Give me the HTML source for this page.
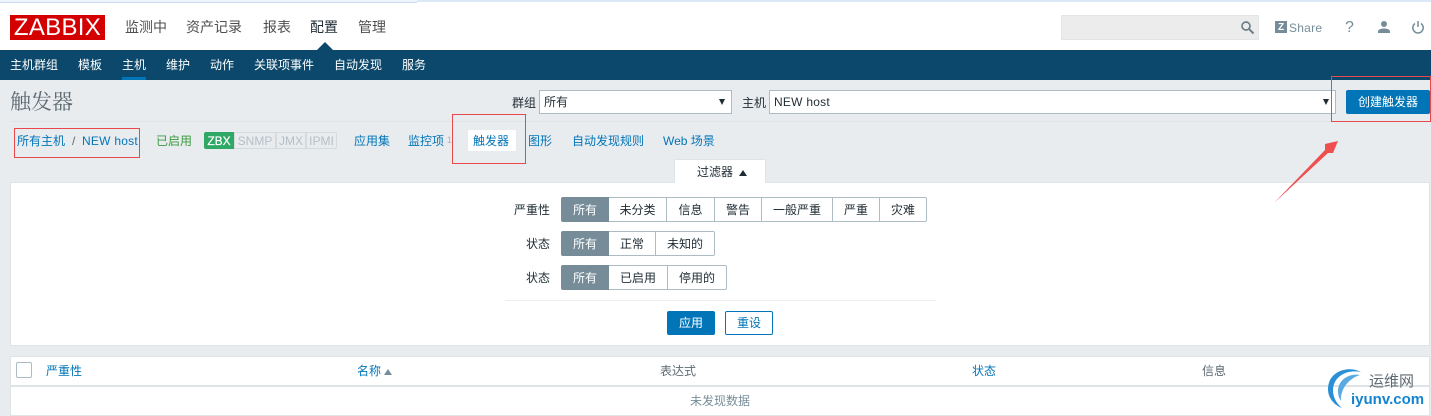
<!DOCTYPE html>
<html lang="zh"><head><meta charset="utf-8"><style>
html,body{margin:0;padding:0}
body{width:1431px;height:416px;position:relative;overflow:hidden;background:#e9ecef;font-family:"Liberation Sans","WenQuanYi Zen Hei","Noto Sans CJK SC",sans-serif;font-size:12px;color:#1f2c33}
.a{position:absolute;white-space:nowrap}
.t{position:absolute;white-space:nowrap;line-height:16px}
.l{color:#0275b8}
.m{font-size:14px;color:#4f4f4f;top:19px}
.n{color:#fff;top:57px}
.box{position:absolute;border:1px solid #e8474c;box-sizing:border-box}
.seg{position:absolute;height:25px;box-sizing:border-box;border:1px solid #acbbc4;border-left:0;background:#fff;text-align:center;line-height:24px;color:#1f2c33;white-space:nowrap}
.seg.on{background:#768d99;border-color:#768d99;color:#fff;border-radius:2px 0 0 2px;border-left:1px solid #768d99}
.seg.end{border-radius:0 2px 2px 0}
.sel{position:absolute;height:24px;box-sizing:border-box;background:#fff;border:1px solid #acbbc4;line-height:23px;padding-left:4px;color:#1f2c33}
.arr{position:absolute;width:0;height:0;border-left:3.5px solid transparent;border-right:3.5px solid transparent;border-top:6px solid #1f2c33}
.tag{position:absolute;top:132px;height:17px;box-sizing:border-box;background:#e9ecef;border:1px solid #d5dadd;color:#b4bfc5;line-height:17px;text-align:center}
</style></head><body>
<div class="a" style="left:0;top:0;width:1431px;height:50px;background:#fff"></div>
<div class="a" style="left:0;top:0;width:417px;height:2px;background:#eef4fb;border-bottom:1px solid #c9daf0"></div>
<div class="a" style="left:417px;top:0;width:1014px;height:2px;background:#dbe8f8"></div>
<div class="a" style="left:10px;top:15px;width:95px;height:25px;background:#d40000;color:#fff;font-size:24px;line-height:26px;text-align:center;letter-spacing:.3px">ZABBIX</div>
<div class="t m" style="left:125px">监测中</div>
<div class="t m" style="left:186px">资产记录</div>
<div class="t m" style="left:263px">报表</div>
<div class="t m" style="left:310px;color:#1f2c33">配置</div>
<div class="t m" style="left:358px">管理</div>
<div class="a" style="left:317px;top:42px;width:0;height:0;border-left:8px solid transparent;border-right:8px solid transparent;border-bottom:8px solid #0b486b"></div>
<div class="a" style="left:1061px;top:15px;width:198px;height:25px;box-sizing:border-box;background:#ececec;border:1px solid #e2e4e5"></div>
<svg class="a" style="left:1240px;top:20px" width="15" height="15" viewBox="0 0 15 15"><circle cx="6" cy="6" r="4" fill="none" stroke="#6b7f8a" stroke-width="1.7"/><path d="M9 9l4.500 4.500" stroke="#6b7f8a" stroke-width="2"/></svg>
<div class="a" style="left:1275px;top:21px;width:12px;height:12px;background:#768d99;color:#fff;font-size:10px;font-weight:bold;line-height:13px;text-align:center">Z</div>
<div class="t" style="left:1289px;top:20px;color:#768d99;letter-spacing:.25px">Share</div>
<div class="t" style="left:1345px;top:20px;color:#768d99;font-size:16px">?</div>
<svg class="a" style="left:1377px;top:20px" width="14" height="14" viewBox="0 0 14 14"><circle cx="7" cy="4" r="3" fill="#768d99"/><path d="M1 13v-1.500c0-2 3-3 6-3s6 1 6 3V13z" fill="#768d99"/></svg>
<svg class="a" style="left:1411px;top:20px" width="14" height="14" viewBox="0 0 14 14"><path d="M4 3.500a5.200 5.200 0 1 0 6 0" fill="none" stroke="#768d99" stroke-width="1.500"/><path d="M7 1v6" stroke="#768d99" stroke-width="1.500"/></svg>

<div class="a" style="left:0;top:50px;width:1431px;height:30px;background:#0b486b"></div>
<div class="t n" style="left:10px">主机群组</div>
<div class="t n" style="left:78px">模板</div>
<div class="t n" style="left:122px">主机</div>
<div class="a" style="left:122px;top:77px;width:24px;height:3px;background:#0275b8"></div>
<div class="t n" style="left:166px">维护</div>
<div class="t n" style="left:210px">动作</div>
<div class="t n" style="left:254px">关联项事件</div>
<div class="t n" style="left:334px">自动发现</div>
<div class="t n" style="left:402px">服务</div>

<div class="t" style="left:10px;top:90px;font-size:21px;line-height:24px;color:#5d6a72;font-family:'Liberation Serif','Noto Serif CJK SC',serif">触发器</div>
<div class="t" style="left:512px;top:95px">群组</div>
<div class="sel" style="left:539px;top:90px;width:193px">所有</div><div class="arr" style="left:719px;top:99px"></div>
<div class="t" style="left:742px;top:95px">主机</div>
<div class="sel" style="left:769px;top:90px;width:567px;letter-spacing:.25px">NEW host</div><div class="arr" style="left:1323px;top:99px"></div>
<div class="a" style="left:1346px;top:90px;width:84px;height:24px;background:#0275b8;border-radius:2px;color:#fff;text-align:center;line-height:24px">创建触发器</div>
<div class="a" style="left:10px;top:121px;width:1421px;height:1px;background:#dfe4e7"></div>

<div class="t l" style="left:17px;top:133px">所有主机</div>
<div class="t" style="left:72px;top:133px;color:#5d6a72">/</div>
<div class="t l" style="left:82px;top:133px;letter-spacing:.25px">NEW host</div>
<div class="t" style="left:156px;top:133px;color:#3b9b3f">已启用</div>
<div class="a" style="left:204px;top:132px;width:30px;height:17px;background:#2fa866;border-radius:2px 0 0 2px;color:#fff;text-align:center;line-height:18px;-webkit-text-stroke:.2px #fff">ZBX</div>
<div class="tag" style="left:234px;width:42px">SNMP</div>
<div class="tag" style="left:276px;width:30px">JMX</div>
<div class="tag" style="left:306px;width:31px;border-radius:0 2px 2px 0">IPMI</div>
<div class="t l" style="left:354px;top:133px">应用集</div>
<div class="t l" style="left:408px;top:133px">监控项</div>
<div class="t" style="left:447px;top:132px;color:#a9b4ba;font-size:9px">1</div>
<div class="a" style="left:468px;top:130px;width:48px;height:21px;background:#fff;border-radius:2px"></div>
<div class="t l" style="left:473px;top:133px">触发器</div>
<div class="t l" style="left:528px;top:133px">图形</div>
<div class="t l" style="left:572px;top:133px">自动发现规则</div>
<div class="t l" style="left:663px;top:133px">Web 场景</div>

<div class="a" style="left:10px;top:182px;width:1420px;height:164px;box-sizing:border-box;background:#fff;border:1px solid #dfe4e7"></div>
<div class="a" style="left:674px;top:159px;width:92px;height:24px;background:#fff;border:1px solid #dfe4e7;border-bottom:0;box-sizing:border-box"></div>
<div class="t" style="left:697px;top:164px">过滤器</div>
<div class="a" style="left:739px;top:170px;width:0;height:0;border-left:4px solid transparent;border-right:4px solid transparent;border-bottom:6px solid #1f2c33"></div>

<div class="t" style="left:514px;top:202px">严重性</div>
<div class="seg on" style="left:561px;top:197px;width:48px">所有</div>
<div class="seg" style="left:609px;top:197px;width:58px">未分类</div>
<div class="seg" style="left:667px;top:197px;width:48px">信息</div>
<div class="seg" style="left:715px;top:197px;width:47px">警告</div>
<div class="seg" style="left:762px;top:197px;width:71px">一般严重</div>
<div class="seg" style="left:833px;top:197px;width:47px">严重</div>
<div class="seg end" style="left:880px;top:197px;width:47px">灾难</div>

<div class="t" style="left:526px;top:236px">状态</div>
<div class="seg on" style="left:561px;top:231px;width:48px">所有</div>
<div class="seg" style="left:609px;top:231px;width:47px">正常</div>
<div class="seg end" style="left:656px;top:231px;width:59px">未知的</div>

<div class="t" style="left:526px;top:270px">状态</div>
<div class="seg on" style="left:561px;top:265px;width:48px">所有</div>
<div class="seg" style="left:609px;top:265px;width:59px">已启用</div>
<div class="seg end" style="left:668px;top:265px;width:59px">停用的</div>

<div class="a" style="left:505px;top:300px;width:431px;height:1px;background:#ebeef0"></div>
<div class="a" style="left:667px;top:311px;width:48px;height:24px;background:#0275b8;border-radius:2px;color:#fff;text-align:center;line-height:25px">应用</div>
<div class="a" style="left:725px;top:311px;width:48px;height:24px;box-sizing:border-box;background:#fff;border:1px solid #0275b8;border-radius:2px;color:#0275b8;text-align:center;line-height:23px">重设</div>

<div class="a" style="left:10px;top:356px;width:1420px;height:60px;box-sizing:border-box;background:#fff;border:1px solid #dfe4e7"></div>
<div class="a" style="left:11px;top:385px;width:1418px;height:2px;background:#dfe4e7"></div>
<div class="a" style="left:16px;top:362px;width:16px;height:16px;box-sizing:border-box;border:1px solid #acbbc4;border-radius:2px;background:#fff"></div>
<div class="t l" style="left:46px;top:363px">严重性</div>
<div class="t l" style="left:357px;top:363px">名称</div>
<div class="a" style="left:384px;top:369px;width:0;height:0;border-left:4px solid transparent;border-right:4px solid transparent;border-bottom:6px solid #768d99"></div>
<div class="t" style="left:660px;top:363px;color:#5d6a72">表达式</div>
<div class="t l" style="left:972px;top:363px">状态</div>
<div class="t" style="left:1202px;top:363px;color:#5d6a72">信息</div>
<div class="t" style="left:690px;top:393px;color:#768d99">未发现数据</div>

<div class="box" style="left:14px;top:128px;width:126px;height:30px"></div>
<div class="box" style="left:452px;top:114px;width:74px;height:50px"></div>
<div class="box" style="left:1331px;top:76px;width:100px;height:46px"></div>
<svg class="a" style="left:1270px;top:136px" width="72" height="70" viewBox="0 0 72 70"><path d="M4 67L55 14 55 8 68 5 63 17 58 17z" fill="#ee4f4f"/></svg>

<svg class="a" style="left:1325px;top:366px" width="50" height="46" viewBox="0 0 50 46"><path d="M36 6C22-1 3 6 3 23c0 9 6 16 14 19-6-5-9-11-9-18C8 12 20 3 36 6z" fill="#2a8fd6"/><path d="M35 9C24 7 13 14 13 25c0 4 1 7 3 10-1-10 6-22 19-26z" fill="#5aa9e0"/></svg>
<div class="t" style="left:1369px;top:374px;font-size:15px;line-height:16px;color:#5d6a72">运维网</div>
<div class="t" style="left:1351px;top:391px;font-size:15px;line-height:18px;font-weight:bold;color:#1583cf">iyunv.com</div>
</body></html>
